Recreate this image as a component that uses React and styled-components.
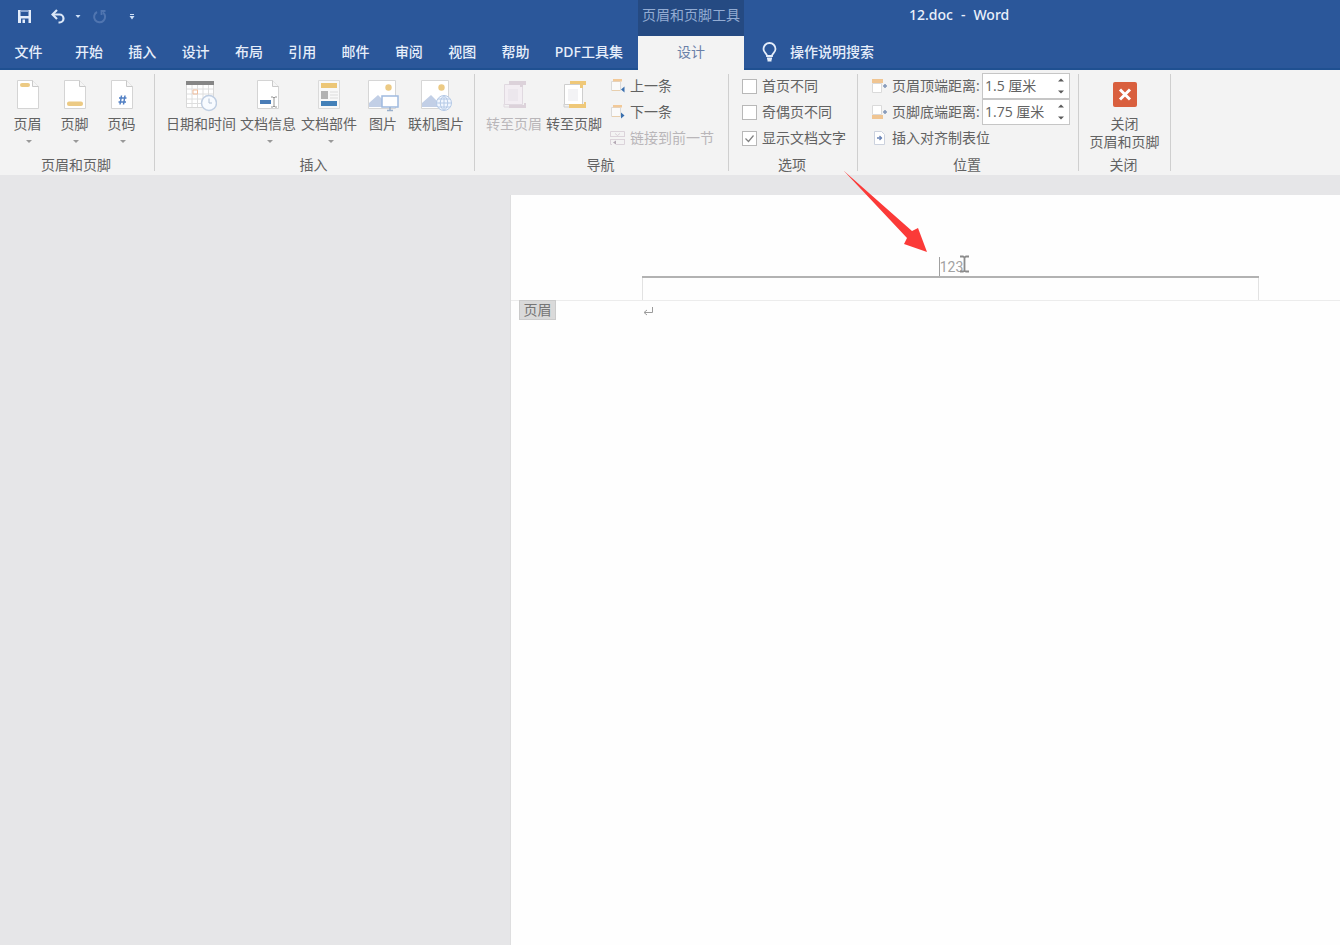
import React from 'react';
import styled, { createGlobalStyle, css } from 'styled-components';

const GlobalStyle = createGlobalStyle`
  *, *::before, *::after { box-sizing: border-box; }
  html, body, #root { height: 100%; }
  body {
    margin: 0;
    background: #e6e6e8;
    color: #626262;
    font-family: "Open Sans", "Noto Sans CJK SC", sans-serif;
    font-size: 14px;
    line-height: 18px;
    overflow: hidden;
  }
  button, input { font: inherit; color: inherit; }
  button {
    padding: 0;
    border: 0;
    background: none;
    white-space: nowrap;
  }
`;

const Shell = styled.div`
  display: flex;
  flex-direction: column;
  height: 100%;
`;

/* ---------- title bar and tabs ---------- */

const Header = styled.header`
  flex: none;
  background: #2b579a;
  color: #e6eefa;
  border-bottom: 2px solid #1f5091;
`;

const TitleBar = styled.div`
  display: flex;
  height: 36px;
`;

const QuickAccess = styled.div`
  display: flex;
  align-items: center;
  flex: none;
  width: 638px;
  padding: 0 0 4px 17px;
`;

const QuickButton = styled.button`
  display: flex;
  margin-right: ${(p) => p.$gap || 0}px;
`;

const ContextTitle = styled.div`
  flex: none;
  width: 106px;
  padding-top: 6px;
  background: #254a82;
  color: #93acd3;
  text-align: center;
  white-space: nowrap;
`;

const WindowTitle = styled.h1`
  display: flex;
  gap: 8px;
  margin: 0;
  padding: 6px 0 0 165px;
  font-family: "Noto Sans", "Noto Sans CJK SC", sans-serif;
  font-size: 14px;
  font-weight: 500;
  color: #e9f0fb;
`;

const TabBar = styled.div`
  display: flex;
  height: 32px;
  font-family: "Noto Sans", "Noto Sans CJK SC", sans-serif;
  font-weight: 500;
`;

const TabList = styled.nav`
  display: flex;
  flex: none;
  justify-content: space-between;
  width: 548px;
  margin-right: 15px;
`;

const Tab = styled.button`
  flex: none;
  ${(p) =>
    p.$file &&
    css`
      width: 57px;
      margin-right: 18px;
    `}
  ${(p) =>
    p.$active &&
    css`
      width: 106px;
      height: 34px;
      padding-bottom: 2px;
      background: #f3f3f3;
      color: #6a80a8;
      font-weight: 400;
    `}
`;

const TellMe = styled.button`
  display: flex;
  align-items: center;
  gap: 13px;
  margin-left: 18px;
`;

/* ---------- ribbon ---------- */

const RibbonBar = styled.div`
  display: flex;
  flex: none;
  height: 105px;
  padding: 4px 0;
  background: #f3f3f3;
  overflow: hidden;
`;

const GroupBox = styled.section`
  display: flex;
  flex-direction: column;
  justify-content: space-between;
  flex: none;
  width: ${(p) => p.$width}px;
  border-right: 1px solid #cfcfcf;
`;

const GroupContent = styled.div`
  display: flex;
  padding-left: ${(p) => p.$inset || 0}px;
`;

const GroupLabel = styled.h2`
  margin: 0 0 -3px;
  padding-right: 2px;
  font-size: 14px;
  font-weight: 400;
  line-height: 18px;
  text-align: center;
`;

const BigButton = styled.button`
  display: flex;
  flex-direction: column;
  align-items: center;
  width: ${(p) => p.$width}px;
  padding-top: 6px;
  line-height: 18px;

  svg { margin-bottom: 3px; }
  &:disabled { color: #b9b6b9; }
`;

const Caret = styled.span`
  width: 0;
  margin: 7px 0 0 3px;
  border: 3px solid transparent;
  border-top-color: #999;
  border-bottom: 0;
`;

const Stack = styled.div`
  display: flex;
  flex-direction: column;
  margin-top: -1px;
  padding-left: ${(p) => p.$inset}px;
`;

const row = css`
  display: flex;
  align-items: center;
  gap: 5px;
  height: 26px;
  white-space: nowrap;
`;

const SmallButton = styled.button`
  ${row}
  &:disabled { color: #b9b6b9; }
`;

const CheckLabel = styled.label`
  ${row}
`;

const CheckBox = styled.input`
  appearance: none;
  width: 15px;
  height: 15px;
  margin: 0;
  border: 1px solid #b8b8b8;
  background: #fff;

  &:checked {
    background: #fff
      url("data:image/svg+xml,%3Csvg xmlns='http://www.w3.org/2000/svg' viewBox='0 0 13 13'%3E%3Cpath d='M2.5 6.5l3 3 5-6' fill='none' stroke='%23808080' stroke-width='1.2'/%3E%3C/svg%3E")
      center / 13px 13px;
  }
`;

const FieldRow = styled.div`
  ${row}
  label { flex: none; width: 85px; }
`;

const Spinner = styled.div`
  display: flex;
  width: 88px;
  height: 26px;
  border: 1px solid #c6c6c6;
  background: #fff;
`;

const SpinnerInput = styled.input`
  flex: 1;
  min-width: 0;
  padding: 0 0 0 2px;
  border: 0;
  outline: 0;
  background: none;
`;

const SpinnerArrows = styled.div`
  display: flex;
  flex-direction: column;
  width: 16px;
  button {
    display: flex;
    flex: 1;
    align-items: center;
    justify-content: center;
  }
`;

/* ---------- document ---------- */

const Workspace = styled.main`
  flex: 1;
  min-height: 0;
  padding: 20px 0 0 510px;
  overflow: hidden;
`;

const Page = styled.article`
  width: 879px;
  height: 100%;
  border: solid #dededf;
  border-width: 0 0 0 1px;
  background: #fefefe;
`;

const PageHeader = styled.div`
  position: relative;
  height: 106px;
  padding: 62px 130px 0 131px;
  border-bottom: 1px solid #ececec;
`;

const HeaderLine = styled.p`
  display: flex;
  justify-content: center;
  height: 21px;
  margin: 0;
  padding-left: 8px;
  border-bottom: 2px solid #b2b2b2;
  color: #a2a2a2;
  font-family: Roboto, "Liberation Sans", sans-serif;
  line-height: 20px;
`;

const HeaderText = styled.span`
  position: relative;
  padding-right: 7px;
  border-left: 1px solid #a0a0a0;
`;

const TextCursor = styled.svg`
  position: absolute;
  top: -2px;
  right: 0;
`;

const HeaderGap = styled.div`
  height: 22px;
  border: solid #e2e2e2;
  border-width: 0 1px;
`;

const HeaderTag = styled.span`
  position: absolute;
  top: 105px;
  left: 8px;
  width: 37px;
  height: 20px;
  border: 1px solid #cbcbcb;
  background: #dadada;
  color: #757575;
  text-align: center;
`;

const Body = styled.div`
  padding: 1px 131px;
`;

const Pointer = styled.svg`
  position: absolute;
  top: 170px;
  left: 843px;
  pointer-events: none;
`;

/* ---------- icons ---------- */

const SaveIcon = () => (
  <svg width="15" height="15" viewBox="0 0 15 15">
    <path d="M1 1h13v13H1z" fill="#e4edfa" />
    <path d="M3.500 1.500h8v5.500h-8z" fill="#2b579a" />
    <path d="M4 9.500h7.500V14H4z" fill="#2b579a" />
    <path d="M5.500 10.500h2.500V14H5.500z" fill="#e4edfa" />
    <path d="M3.500 1.500h8v1.500h-8z" fill="#8aa6d2" />
  </svg>
);

const UndoIcon = () => (
  <svg width="15" height="15" viewBox="0 0 15 15" fill="none" stroke="#dce8f8" strokeWidth="2.200">
    <path d="M2 5.500h6.500a4 4 0 0 1 0 8H7.500" />
    <path d="M6 1L1.500 5.500 6 10" />
  </svg>
);

const RedoIcon = () => (
  <svg width="15" height="15" viewBox="0 0 15 15" fill="none" stroke="#5075b0" strokeWidth="2">
    <path d="M5 3A5.500 5.500 0 1 0 11 3.500" />
    <path d="M9.500 6V2h4" strokeWidth="1.800" />
  </svg>
);

const QatArrow = ({ bar }) => (
  <svg width="6" height="8" viewBox="0 0 6 8" fill="#cfe0f6">
    {bar && <path d="M1 2h4v1H1z" />}
    <path d={bar ? 'M.5 4h5L3 7.500z' : 'M.5 3h5L3 6z'} />
  </svg>
);

const BulbIcon = () => (
  <svg width="15" height="20" viewBox="0 0 15 20" fill="none" stroke="#e4edfa" strokeWidth="1.800">
    <path d="M5 14c0-2.500-3.500-3.500-3.500-7a6 6 0 0 1 12 0c0 3.500-3.500 4.500-3.500 7z" />
    <path d="M5 16.500h5M5.500 18.500h4" />
  </svg>
);

const Sheet = () => (
  <>
    <path d="M3.500.5h15l6 6v22h-21z" fill="#fff" stroke="#d4d4d4" />
    <path d="M18.500.5v6h6" fill="#f5f5f5" stroke="#c9c9c9" />
  </>
);

const BigSvg = ({ children, width = 28 }) => (
  <svg width={width} height="32" viewBox={`0 0 ${width} 32`} fill="none">
    {children}
  </svg>
);

const HeaderIcon = () => (
  <BigSvg>
    <Sheet />
    <rect x="6" y="3" width="10" height="4" rx="2" fill="#ecca84" />
  </BigSvg>
);

const FooterIcon = () => (
  <BigSvg>
    <Sheet />
    <rect x="6" y="21.500" width="16" height="4.500" rx="2" fill="#ecca84" />
  </BigSvg>
);

const NumberIcon = () => (
  <BigSvg>
    <Sheet />
    <path d="M13.500 15.500l-1.500 9M17 15.500l-1.500 9M11 18h7.500M10.500 22H18" stroke="#5280c4" strokeWidth="1.500" />
  </BigSvg>
);

const CalendarIcon = () => (
  <BigSvg width={32}>
    <path d="M1.500 3.500h27v24h-27z" fill="#fff" stroke="#d8d8d8" />
    <path d="M7 4v23M12.500 4v23M18 4v23M23.500 4v23M2 9h26M2 14h26M2 19h26M2 23.500h26" stroke="#dedede" />
    <path d="M1 1h28v4H1z" fill="#868686" />
    <path d="M8 10h4.500v4H8z" stroke="#f0bd9c" />
    <circle cx="24" cy="23" r="7.500" fill="#f8fbff" stroke="#bfcee2" strokeWidth="1.500" />
    <path d="M24 18.500V23h3" stroke="#b0c0d4" />
  </BigSvg>
);

const DocInfoIcon = () => (
  <BigSvg>
    <Sheet />
    <rect x="6" y="20" width="11" height="4" fill="#4a7db7" />
    <path d="M17 17h2l1 1 1-1h2M17 27h2l1-1 1 1h2M20 18v8" stroke="#959595" />
  </BigSvg>
);

const PartsIcon = () => (
  <BigSvg>
    <path d="M3.500.5h21v28h-21z" fill="#f8f8f8" stroke="#dadada" />
    <path d="M6 3h16v5H6z" fill="#ecc676" />
    <path d="M6 11h7v8H6z" fill="#b2b2b2" />
    <path d="M15 12h8M15 15h8M15 18h8" stroke="#dcdcdc" />
    <path d="M6 21h16v5H6z" fill="#4380b8" />
  </BigSvg>
);

const Photo = () => (
  <>
    <path d="M1.500.5h27v28h-27z" fill="#fff" stroke="#d6d6d6" />
    <circle cx="21.500" cy="7.500" r="3.200" fill="#ecca84" />
    <path d="M2 27v-4l9-8 8 8v4z" fill="#c2cfe6" />
  </>
);

const PictureIcon = () => (
  <BigSvg width={32}>
    <Photo />
    <path d="M15 16h16v11H15z" fill="#fff" stroke="#a0bbe0" strokeWidth="1.500" />
    <path d="M23 27v3M20 30.500h6" stroke="#9ab0cc" strokeWidth="1.500" />
  </BigSvg>
);

const OnlinePictureIcon = () => (
  <BigSvg width={32}>
    <Photo />
    <circle cx="24" cy="23" r="7.500" fill="#f2f7ff" stroke="#b4c9e6" />
    <path d="M16.500 23h15M24 15.500v15M18 19h12M18 27h12M24 15.500c-5 4-5 11 0 15M24 15.500c5 4 5 11 0 15" stroke="#b4c9e6" />
  </BigSvg>
);

const GotoIcon = ({ footer }) => {
  const accent = footer ? '#efc878' : '#dcd2da';
  const edge = footer ? '#cecece' : '#e0d9e0';
  return (
    <BigSvg>
      <path d="M4.500 4.500h18v20h-18z" fill={footer ? '#fff' : '#f3eef3'} stroke={edge} />
      <path d="M8 9h10v12H8z" fill={footer ? '#f3f3f5' : '#ece7ed'} />
      <path d={footer ? 'M10 1h16v4h-3v3h-3V4H10z' : 'M9 1h17v4h-3v2h-3V5H9z'} fill={accent} />
      <path d={footer ? 'M9 24h15v-2h2v6H9z' : 'M9 25h15v-2h2v5H9z'} fill={accent} />
      <path d="M4 24v3h5" stroke={edge} />
    </BigSvg>
  );
};

const SmallSvg = ({ children }) => (
  <svg width="15" height="16" viewBox="0 0 15 16" fill="none">
    {children}
  </svg>
);

const StepIcon = ({ next }) => (
  <SmallSvg>
    <path d="M1.500 3.500h9v9h-9z" fill="#fafafa" stroke="#dadada" />
    <path d="M3 1h9v2.500H3z" fill="#f2c998" />
    <path d="M2 12.500h8" stroke="#e8cfae" />
    <path d={next ? 'M11 8.500l3.500 3-3.500 3z' : 'M14.500 8.500l-3.500 3 3.500 3z'} fill="#3a6fae" />
  </SmallSvg>
);

const LinkIcon = () => (
  <SmallSvg>
    <path d="M.5 6V1.500h14V6M.5 10v4.500H2M6 14.500h8.500V10M0 6.500h15M0 9.500h15" stroke="#dbd3da" />
    <path d="M5 3.500l2.500 2L10 3.500" stroke="#d8d0d7" />
    <path d="M6 10.500v4l-3-2z" fill="#b3a8b3" />
  </SmallSvg>
);

const DistanceIcon = ({ footer }) => (
  <SmallSvg>
    <path d={footer ? 'M.5 1.500h9v9h-9z' : 'M.5 5.500h9v9h-9z'} fill="#fff" stroke="#dadada" />
    <path d={footer ? 'M0 11h11v4H0z' : 'M0 1h11v4H0z'} fill="#f0c592" />
    <path d="M11 8h4M13 6v4" stroke="#8297b8" strokeWidth="1.500" />
  </SmallSvg>
);

const AlignIcon = () => (
  <SmallSvg>
    <path d="M2.500 1.500h7l3 3v10h-10z" fill="#fff" stroke="#ccd2de" />
    <path d="M5 8h5M7.500 6l2 2-2 2" stroke="#6a84b6" strokeWidth="1.300" />
  </SmallSvg>
);

const CloseIcon = () => (
  <BigSvg width={24}>
    <rect y="2" width="24" height="25" rx="2" fill="#d95f3e" />
    <path d="M7 9.500l10 10M17 9.500l-10 10" stroke="#fff" strokeWidth="3" />
  </BigSvg>
);

const SpinArrow = ({ down }) => (
  <svg width="6" height="4" viewBox="0 0 6 4" fill="#5a5a5a">
    <path d={down ? 'M0 .5h6L3 3.500z' : 'M0 3.500h6L3 .5z'} />
  </svg>
);

const ReturnMark = () => (
  <svg width="12" height="10" viewBox="0 0 12 10" fill="none" stroke="#9b9b9b">
    <path d="M10.500 1v5.500h-8M5 4L2 6.500 5 9" />
  </svg>
);

/* ---------- composed parts ---------- */

const Group = ({ label, width, inset, children }) => (
  <GroupBox $width={width} aria-label={label}>
    <GroupContent $inset={inset}>{children}</GroupContent>
    <GroupLabel>{label}</GroupLabel>
  </GroupBox>
);

const Big = ({ icon, label, width, menu, disabled }) => (
  <BigButton type="button" $width={width} disabled={disabled}>
    {icon}
    {label}
    {menu && <Caret />}
  </BigButton>
);

const Distance = ({ id, icon, label, value }) => (
  <FieldRow>
    {icon}
    <label htmlFor={id}>{label}</label>
    <Spinner>
      <SpinnerInput id={id} type="text" defaultValue={value} />
      <SpinnerArrows>
        <button type="button" aria-label="增加"><SpinArrow /></button>
        <button type="button" aria-label="减少"><SpinArrow down /></button>
      </SpinnerArrows>
    </Spinner>
  </FieldRow>
);

const Check = ({ label, checked }) => (
  <CheckLabel>
    <CheckBox type="checkbox" defaultChecked={checked} />
    {label}
  </CheckLabel>
);

const tabs = ['开始', '插入', '设计', '布局', '引用', '邮件', '审阅', '视图', '帮助', 'PDF工具集'];

export default function App() {
  return (
    <Shell>
      <GlobalStyle />
      <Header>
        <TitleBar>
          <QuickAccess>
            <QuickButton type="button" aria-label="保存" $gap={19}><SaveIcon /></QuickButton>
            <QuickButton type="button" aria-label="撤消" $gap={9}><UndoIcon /></QuickButton>
            <QuickButton type="button" aria-label="撤消列表" $gap={11}><QatArrow /></QuickButton>
            <QuickButton type="button" aria-label="恢复" $gap={22}><RedoIcon /></QuickButton>
            <QuickButton type="button" aria-label="自定义快速访问工具栏"><QatArrow bar /></QuickButton>
          </QuickAccess>
          <ContextTitle>页眉和页脚工具</ContextTitle>
          <WindowTitle>
            <span>12.doc</span>
            <span>-</span>
            <span>Word</span>
          </WindowTitle>
        </TitleBar>
        <TabBar>
          <Tab type="button" $file>文件</Tab>
          <TabList>
            {tabs.map((name) => (
              <Tab type="button" key={name}>{name}</Tab>
            ))}
          </TabList>
          <Tab type="button" $active>设计</Tab>
          <TellMe type="button">
            <BulbIcon />
            操作说明搜索
          </TellMe>
        </TabBar>
      </Header>

      <RibbonBar>
        <Group label="页眉和页脚" width={155} inset={4}>
          <Big icon={<HeaderIcon />} label="页眉" width={47} menu />
          <Big icon={<FooterIcon />} label="页脚" width={47} menu />
          <Big icon={<NumberIcon />} label="页码" width={47} menu />
        </Group>
        <Group label="插入" width={320} inset={9}>
          <Big icon={<CalendarIcon />} label="日期和时间" width={74} />
          <Big icon={<DocInfoIcon />} label="文档信息" width={60} menu />
          <Big icon={<PartsIcon />} label="文档部件" width={62} menu />
          <Big icon={<PictureIcon />} label="图片" width={46} />
          <Big icon={<OnlinePictureIcon />} label="联机图片" width={60} />
        </Group>
        <Group label="导航" width={254} inset={9}>
          <Big icon={<GotoIcon />} label="转至页眉" width={60} disabled />
          <Big icon={<GotoIcon footer />} label="转至页脚" width={60} />
          <Stack $inset={6}>
            <SmallButton type="button"><StepIcon />上一条</SmallButton>
            <SmallButton type="button"><StepIcon next />下一条</SmallButton>
            <SmallButton type="button" disabled><LinkIcon />链接到前一节</SmallButton>
          </Stack>
        </Group>
        <Group label="选项" width={129} inset={0}>
          <Stack $inset={13}>
            <Check label="首页不同" />
            <Check label="奇偶页不同" />
            <Check label="显示文档文字" checked />
          </Stack>
        </Group>
        <Group label="位置" width={221} inset={0}>
          <Stack $inset={14}>
            <Distance id="header-distance" icon={<DistanceIcon />} label="页眉顶端距离:" value="1.5 厘米" />
            <Distance id="footer-distance" icon={<DistanceIcon footer />} label="页脚底端距离:" value="1.75 厘米" />
            <SmallButton type="button"><AlignIcon />插入对齐制表位</SmallButton>
          </Stack>
        </Group>
        <Group label="关闭" width={92} inset={0}>
          <Big icon={<CloseIcon />} label={<span>关闭<br />页眉和页脚</span>} width={91} />
        </Group>
      </RibbonBar>

      <Workspace>
        <Page>
          <PageHeader>
            <HeaderLine>
              <HeaderText>
                123
                <TextCursor width="11" height="18" viewBox="0 0 11 18" fill="none" stroke="#8c8c8c" strokeWidth="1.800">
                  <path d="M1 1.500h3l1.500 1L7 1.500h3M1 16.500h3l1.500-1 1.500 1h3M5.500 2v14" />
                </TextCursor>
              </HeaderText>
            </HeaderLine>
            <HeaderGap />
            <HeaderTag>页眉</HeaderTag>
          </PageHeader>
          <Body>
            <ReturnMark />
          </Body>
        </Page>
      </Workspace>

      <Pointer width="84" height="82" viewBox="0 0 84 82">
        <path d="M.5.500L69 61l6-3 9 24-23-8 3-6z" fill="#fb3a38" />
      </Pointer>
    </Shell>
  );
}
